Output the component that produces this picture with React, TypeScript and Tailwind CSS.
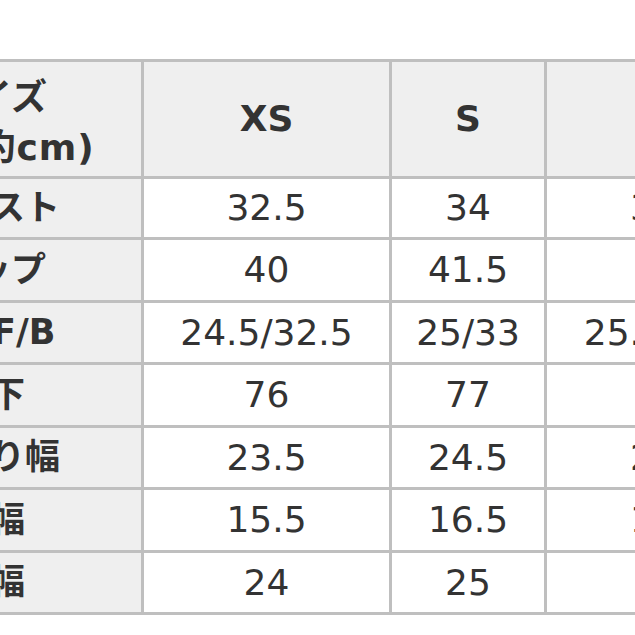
import React from "react";

const sizes = ["XS", "S", "M"];
const rows: { label: string; values: string[]; pad: string }[] = [
  { label: "バスト", values: ["32.5", "34", "35.5"], pad: "pl-[32px]" },
  { label: "ヒップ", values: ["40", "41.5", "43"], pad: "pl-[18px]" },
  { label: "丈F/B", values: ["24.5/32.5", "25/33", "25.5/33.5"], pad: "pl-[34px]" },
  { label: "股下", values: ["76", "77", "78"], pad: "pl-[32px]" },
  { label: "渡り幅", values: ["23.5", "24.5", "25.5"], pad: "pl-[32px]" },
  { label: "裾幅", values: ["15.5", "16.5", "17.5"], pad: "pl-[32px]" },
  { label: "肩幅", values: ["24", "25", "26"], pad: "pl-[32px]" },
];

const font = { fontFamily: '"DejaVu Sans", "Noto Sans CJK JP", sans-serif' };

export default function App() {
  return (
    <div className="w-[635px] h-[635px] overflow-hidden bg-white pt-[59px]" style={font}>
      <div className="ml-[-80px] w-max grid grid-cols-[218px_245px_152px_246px] grid-rows-[114px_58px_60px_59px_60px_59px_60px_59px] gap-[3px] p-[3px] bg-[#bfbfbf] text-[#333]">
        <div className="bg-[#efefef] flex flex-col justify-center pl-[17px] pt-[8px] text-[36px] font-bold leading-[50px] whitespace-nowrap">
          <span>サイズ</span>
          <span className="ml-[22px] tracking-[1px]">(約cm)</span>
        </div>
        {sizes.map((s) => (
          <div key={s} className="bg-[#efefef] flex items-center justify-center text-[36px] font-bold">
            {s}
          </div>
        ))}
        {rows.map((r) => (
          <React.Fragment key={r.label}>
            <div className={`bg-[#efefef] flex items-center ${r.pad} text-[35px] font-bold whitespace-nowrap`}>
              {r.label}
            </div>
            {r.values.map((v, i) => (
              <div key={i} className="bg-white flex items-center justify-center text-[36px] whitespace-nowrap">
                {v}
              </div>
            ))}
          </React.Fragment>
        ))}
      </div>
    </div>
  );
}
